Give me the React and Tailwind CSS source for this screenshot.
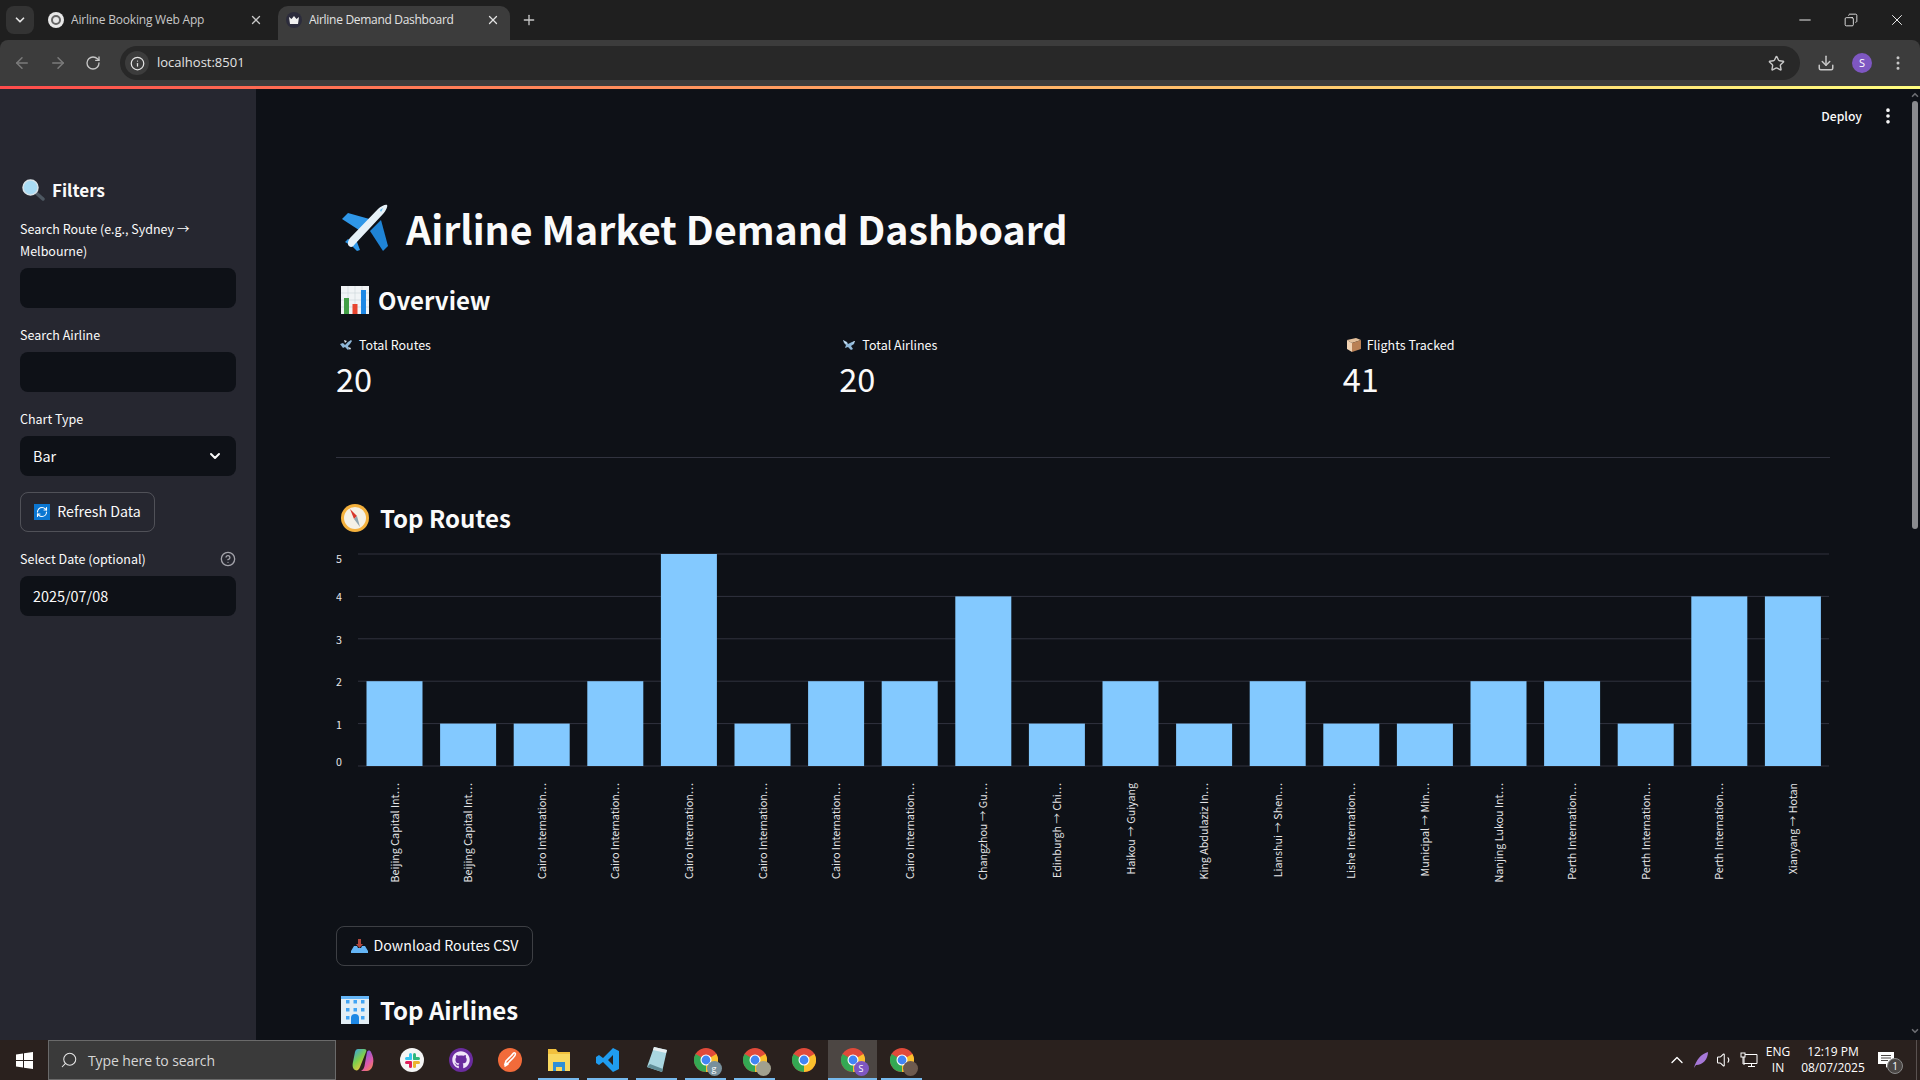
import React from 'react';
import {
  ArrowLeft, ArrowRight, RotateCw, Info, Star, Download, EllipsisVertical, ChevronDown, ChevronUp,
  X, Plus, Minus, Search, Copy, CircleHelp, RefreshCw, Volume1,
} from 'lucide-react';
import { FaGithub } from 'react-icons/fa';

// ─── Data ─────────────────────────────────────────────────────────────────────

const ROUTES = [
  { label: 'Beijing Capital Int…', value: 2 },
  { label: 'Beijing Capital Int…', value: 1 },
  { label: 'Cairo Internation…', value: 1 },
  { label: 'Cairo Internation…', value: 2 },
  { label: 'Cairo Internation…', value: 5 },
  { label: 'Cairo Internation…', value: 1 },
  { label: 'Cairo Internation…', value: 2 },
  { label: 'Cairo Internation…', value: 2 },
  { label: 'Changzhou → Gu…', value: 4 },
  { label: 'Edinburgh → Chi…', value: 1 },
  { label: 'Haikou → Guiyang', value: 2 },
  { label: 'King Abdulaziz In…', value: 1 },
  { label: 'Lianshui → Shen…', value: 2 },
  { label: 'Lishe Internation…', value: 1 },
  { label: 'Municipal → Min…', value: 1 },
  { label: 'Nanjing Lukou Int…', value: 2 },
  { label: 'Perth Internation…', value: 2 },
  { label: 'Perth Internation…', value: 1 },
  { label: 'Perth Internation…', value: 4 },
  { label: 'Xianyang → Hotan', value: 4 },
];

// ─── Emoji drawings ───────────────────────────────────────────────────────────

function PlaneEmoji() {
  return (
    <svg width="50" height="48" viewBox="0 0 50 48" className="shrink-0">
      <path d="M1 15l6-6 25 7-11 12z" fill="#2f97e8" />
      <path d="M29 27l11-11 7 26-5 5z" fill="#1f84d6" />
      <path d="M4 38l3-3 9 3 3 8-3 1-5-5z" fill="#2f97e8" />
      <path d="M8 42c-2-2-1-5 1-8L37 5c3-3 8-5 9-4s-1 6-4 9L14 40c-2 3-4 4-6 2z" fill="#e6f1f8" />
      <path d="M39 6l3-2-2 4z" fill="#5bb8ee" />
    </svg>
  );
}

function ChartEmoji() {
  return (
    <svg width="28" height="28" viewBox="0 0 28 28" className="shrink-0">
      <rect width="28" height="28" fill="#f1f4f6" />
      <path d="M0 7h28M0 14h28M0 21h28M7 0v28M14 0v28M21 0v28" stroke="#cfd8dc" strokeWidth="0.7" />
      <rect x="3" y="12" width="5" height="16" fill="#43a047" />
      <rect x="11.5" y="18" width="5" height="10" fill="#e8452f" />
      <rect x="20" y="4" width="5" height="24" fill="#1e88e5" />
    </svg>
  );
}

function CompassEmoji() {
  return (
    <svg width="30" height="30" viewBox="0 0 30 30" className="shrink-0">
      <circle cx="15" cy="15" r="14" fill="#f4b13d" />
      <circle cx="15" cy="15" r="11" fill="#f5f1e6" />
      <path d="M10 6l7 7-3 3z" fill="#d8372c" />
      <path d="M20 24l-6-8 3-3z" fill="#90a4ae" />
    </svg>
  );
}

function MagnifierEmoji() {
  return (
    <svg width="23" height="22" viewBox="0 0 23 22" className="shrink-0">
      <path d="M13 13l8 7" stroke="#4d5761" strokeWidth="3.5" strokeLinecap="round" />
      <circle cx="8.5" cy="8.5" r="7.5" fill="#a9dcf5" stroke="#d9e3e8" strokeWidth="1.5" />
    </svg>
  );
}

function OfficeEmoji() {
  const windows = [4, 12, 20].flatMap(y => [5, 12.5, 20].map(x => ({ x, y })));
  return (
    <svg width="28" height="28" viewBox="0 0 28 28" className="shrink-0">
      <rect width="28" height="28" fill="#e3eef5" />
      <rect width="28" height="3" fill="#64b5f6" />
      {windows.map((w, i) => <rect key={i} x={w.x} y={w.y} width="3.5" height="3.5" fill="#42a5f5" />)}
      <path d="M10 28v-6a4 4 0 0 1 8 0v6z" fill="#1e88e5" />
    </svg>
  );
}

function TrayEmoji() {
  return (
    <svg width="17" height="14" viewBox="0 0 17 14" className="shrink-0">
      <rect x="7" y="0" width="3" height="7" fill="#b0473d" />
      <path d="M5 5h7l-3.5 4z" fill="#b0473d" />
      <path d="M3 7h3l1 2h3l1-2h3l3 5v2H0v-2z" fill="#64b5f6" />
    </svg>
  );
}

function RefreshEmoji() {
  return (
    <span className="w-[16px] h-[16px] bg-[#0b76d1] shrink-0 flex items-center justify-center">
      <RefreshCw size={12} color="#ffffff" strokeWidth={2.2} />
    </span>
  );
}

function RoutesEmoji() {
  return (
    <svg width="14" height="12" viewBox="0 0 14 12" className="shrink-0">
      <path d="M1 5l3-1 2 2 3-3 3-2 1 1-2 3-2 2 1 3-1 1-3-3-2 1z" fill="#8fb8d8" />
      <path d="M5 1l3 1-2 2z M9 8l3 1-1 2z" fill="#e1eaf0" />
    </svg>
  );
}

function AirlinesEmoji() {
  return (
    <svg width="14" height="12" viewBox="0 0 14 12" className="shrink-0">
      <path d="M1 1l4 2 1 2 4-2 3-1-1 3-3 2 2 3-2 1-3-3-3 1 1-3-2-2z" fill="#8fb8d8" />
      <path d="M1 1l4 3-1 1zM12 2l1 0-3 3z" fill="#e1eaf0" />
    </svg>
  );
}

function BoxEmoji() {
  return (
    <svg width="15" height="14" viewBox="0 0 15 14" className="shrink-0">
      <path d="M1 2l9-2 5 2-9 3z" fill="#e3bf9a" />
      <path d="M1 2l5 3v9l-5-3z" fill="#f0d2b3" />
      <path d="M6 5l9-3v9l-9 3z" fill="#b98055" />
    </svg>
  );
}

// ─── Browser favicons / taskbar icons ─────────────────────────────────────────

function ChromeIcon({ badge, badgeClass }) {
  return (
    <span className="relative w-[24px] h-[24px] block">
      <svg width="24" height="24" viewBox="0 0 24 24">
        <circle cx="12" cy="12" r="12" fill="#e04a3a" />
        <path d="M12 12L22.4 6A12 12 0 0 1 12 24z" fill="#fbc02d" />
        <path d="M12 12l0 12A12 12 0 0 1 1.6 6z" fill="#34a853" />
        <circle cx="12" cy="12" r="5.5" fill="#ffffff" />
        <circle cx="12" cy="12" r="4.4" fill="#4285f4" />
      </svg>
      {badge !== undefined && (
        <span className={`absolute -right-[4px] -bottom-[4px] w-[15px] h-[15px] rounded-full flex items-center justify-center text-[9px] leading-none text-white ${badgeClass}`}>
          {badge}
        </span>
      )}
    </span>
  );
}

const TASK_ICONS = [
  {
    node: (
      <svg width="22" height="24" viewBox="0 0 22 24">
        <defs>
          <linearGradient id="copLeft" x1="0" y1="0" x2="0.6" y2="1">
            <stop offset="0" stopColor="#2f9df0" />
            <stop offset="0.55" stopColor="#7ed04b" />
            <stop offset="1" stopColor="#f5c63c" />
          </linearGradient>
          <linearGradient id="copRight" x1="0.4" y1="0" x2="1" y2="1">
            <stop offset="0" stopColor="#7d5be0" />
            <stop offset="0.55" stopColor="#e05aa8" />
            <stop offset="1" stopColor="#f7933c" />
          </linearGradient>
        </defs>
        <path d="M6 1h6c2 0 3 1 2 3l-6 15c-1 3-3 4-5 3-2-1-3-4-2-8L3 4c.5-2 1.500-3 3-3z" fill="url(#copLeft)" />
        <path d="M15 4c1-2 3-2 4 0 2 4 3 8 2 12-.5 4-3 7-6 7H9c2-1 3-3 3.500-5z" fill="url(#copRight)" />
      </svg>
    ),
  },
  {
    node: (
      <svg width="24" height="24" viewBox="0 0 24 24">
        <circle cx="12" cy="12" r="12" fill="#f5f5f5" />
        <rect x="9" y="5" width="3" height="7" rx="1.5" fill="#36c5f0" />
        <rect x="5" y="9" width="7" height="3" rx="1.5" fill="#36c5f0" />
        <rect x="13" y="5" width="3" height="7" rx="1.5" fill="#2eb67d" />
        <rect x="13" y="9" width="7" height="3" rx="1.5" fill="#2eb67d" />
        <rect x="13" y="13" width="3" height="7" rx="1.5" fill="#ecb22e" />
        <rect x="13" y="13" width="7" height="3" rx="1.5" fill="#ecb22e" />
        <rect x="9" y="13" width="3" height="7" rx="1.5" fill="#e01e5a" />
        <rect x="5" y="13" width="7" height="3" rx="1.5" fill="#e01e5a" />
      </svg>
    ),
  },
  {
    node: (
      <span className="w-[24px] h-[24px] rounded-full bg-[#6a2c9e] flex items-center justify-center">
        <FaGithub size={18} color="#f1e6fa" />
      </span>
    ),
  },
  {
    node: (
      <svg width="24" height="24" viewBox="0 0 24 24">
        <circle cx="12" cy="12" r="12" fill="#f26b3a" />
        <path d="M17 5c1 1 0 3-2 5l-5 5-3 1 1-3 5-5c2-2 3-4 4-3zM7 18l3-2" stroke="#ffffff" strokeWidth="1.6" fill="none" strokeLinecap="round" />
      </svg>
    ),
  },
  {
    running: true,
    node: (
      <svg width="24" height="22" viewBox="0 0 24 22">
        <path d="M1 0h8l2 3h12v19H1z" fill="#f2c13d" />
        <rect x="1" y="5" width="22" height="17" fill="#f9d860" />
        <path d="M6 13h12v9h-3v-4H9v4H6z" fill="#2f8fd6" />
      </svg>
    ),
  },
  {
    running: true,
    node: (
      <svg width="24" height="24" viewBox="0 0 24 24">
        <path d="M17 0l6 3v18l-6 3L7 14l-4 3-3-2V9l3-2 4 3zm0 7l-5 5 5 5z" fill="#1f9cf0" fillRule="evenodd" />
      </svg>
    ),
  },
  {
    running: true,
    node: (
      <svg width="22" height="26" viewBox="0 0 22 26">
        <path d="M8 0l13 3-5 22-15-5z" fill="#a9d6e0" />
        <path d="M8 0l13 3-1 3L7 3z" fill="#e8eef0" />
        <path d="M1 20l15 5 1-3-13-5z" fill="#5f8c96" />
      </svg>
    ),
  },
  { running: true, node: <ChromeIcon badge="g" badgeClass="bg-[#78909c]" /> },
  { running: true, node: <ChromeIcon badge="" badgeClass="bg-[#a1a08f]" /> },
  { node: <ChromeIcon /> },
  { running: true, active: true, node: <ChromeIcon badge="S" badgeClass="bg-[#7e57c2]" /> },
  { running: true, node: <ChromeIcon badge="" badgeClass="bg-[#6d5a4f]" /> },
];

// ─── Browser chrome ───────────────────────────────────────────────────────────

function BrowserTabs() {
  return (
    <div className="h-[40px] bg-[#1f1f1f] flex items-end pl-[6px] font-['Open_Sans',sans-serif] shrink-0">
      <div className="w-[28px] h-[28px] rounded-lg bg-[#333333] flex items-center justify-center mb-[6px]">
        <ChevronDown size={14} color="#e3e3e3" strokeWidth={3} />
      </div>
      <div className="w-[244px] h-[34px] flex items-center pl-[14px] pr-[15px] pb-[6px] gap-[7px]">
        <span className="w-[16px] h-[16px] rounded-full bg-[#e8e8e8] flex items-center justify-center shrink-0">
          <span className="w-[10px] h-[10px] rounded-full border-2 border-[#666666]" />
        </span>
        <span className="text-[12px] text-[#c7c7c7] flex-1 truncate tracking-[-0.2px]">Airline Booking Web App</span>
        <X size={14} color="#c7c7c7" strokeWidth={2.2} />
      </div>
      <div className="w-[232px] h-[34px] rounded-t-[10px] bg-[#3c3c3c] flex items-center pl-[8px] pr-[10px] pb-[6px] gap-[7px]">
        <span className="w-[16px] h-[16px] rounded-full bg-[#2c2c3c] flex items-center justify-center shrink-0">
          <svg width="10" height="8" viewBox="0 0 10 8"><path d="M0 1l2.500 2L5 0l2.500 3L10 1 9 8H1z" fill="#f0f0f0" /></svg>
        </span>
        <span className="text-[12px] text-[#e3e3e3] flex-1 truncate tracking-[-0.3px]">Airline Demand Dashboard</span>
        <X size={14} color="#e3e3e3" strokeWidth={2.2} />
      </div>
      <div className="ml-[11px] mb-[12px]">
        <Plus size={16} color="#c7c7c7" strokeWidth={2} />
      </div>
      <div className="flex-1" />
      <div className="flex items-center gap-[30px] pr-[14px] mb-[11px]">
        <Minus size={18} color="#ffffff" strokeWidth={1.2} />
        <Copy size={14} color="#ffffff" strokeWidth={1.4} className="-scale-x-100" />
        <X size={18} color="#ffffff" strokeWidth={1.2} />
      </div>
    </div>
  );
}

function AddressBar() {
  return (
    <div className="h-[46px] bg-[#3c3c3c] rounded-t-[8px] flex items-center shrink-0 font-['Open_Sans',sans-serif]">
      <div className="flex items-center gap-[18px] pl-[13px] w-[120px]">
        <ArrowLeft size={18} color="#7b7b7b" />
        <ArrowRight size={18} color="#7b7b7b" />
        <RotateCw size={16} color="#c7c7c7" />
      </div>
      <div className="w-[1680px] h-[34px] rounded-full bg-[#282828] flex items-center pl-[5px] pr-[15px]">
        <span className="w-[24px] h-[24px] rounded-full bg-[#3c3c3c] flex items-center justify-center">
          <Info size={15} color="#e3e3e3" />
        </span>
        <span className="ml-[8px] text-[13px] text-[#e3e3e3] flex-1">localhost:8501</span>
        <Star size={17} color="#c7c7c7" />
      </div>
      <div className="flex items-center pl-[17px]">
        <Download size={18} color="#c7c7c7" />
        <span className="ml-[17px] w-[20px] h-[20px] rounded-full bg-[#7e57c2] text-white text-[11px] flex items-center justify-center">S</span>
        <EllipsisVertical size={18} color="#c7c7c7" className="ml-[17px]" />
      </div>
    </div>
  );
}

// ─── Streamlit sidebar ────────────────────────────────────────────────────────

function Field({ label, children, help }) {
  return (
    <div className="flex flex-col">
      <div className="flex items-center justify-between mb-[6px]">
        <label className="text-[12.5px] leading-[22px] text-[#fafafa]">{label}</label>
        {help && <CircleHelp size={16} color="#a3a3aa" />}
      </div>
      {children}
    </div>
  );
}

function InputBox({ children }) {
  return (
    <div className="h-[40px] rounded-lg bg-[#0e1117] flex items-center justify-between px-[13px] pb-[1px] text-[14.4px] text-[#fafafa]">
      {children}
    </div>
  );
}

function Sidebar() {
  return (
    <aside className="w-[256px] bg-[#262730] pt-[86px] px-[20px] shrink-0">
      <h2 className="flex items-center gap-[7px] h-[30px] text-[17px] font-semibold text-[#fafafa] mb-[13px] pl-[2px]">
        <MagnifierEmoji />
        Filters
      </h2>
      <div className="flex flex-col gap-[16px]">
        <Field label="Search Route (e.g., Sydney → Melbourne)"><InputBox /></Field>
        <Field label="Search Airline"><InputBox /></Field>
        <Field label="Chart Type">
          <InputBox>
            Bar
            <ChevronDown size={16} color="#fafafa" strokeWidth={3} />
          </InputBox>
        </Field>
        <button className="w-[135px] h-[40px] rounded-lg border border-[#fafafa33] flex items-center justify-center gap-[7px] pb-[1px] text-[14.2px] text-[#fafafa]">
          <RefreshEmoji />
          Refresh Data
        </button>
        <Field label="Select Date (optional)" help>
          <InputBox>2025/07/08</InputBox>
        </Field>
      </div>
    </aside>
  );
}

// ─── Main content ─────────────────────────────────────────────────────────────

function Metric({ icon, label, value }) {
  return (
    <div className="flex-1">
      <div className="flex items-center gap-[6px] h-[22px] pl-[3px] text-[12.5px] text-[#fafafa]">
        {icon}
        {label}
      </div>
      <div className="mt-[2px] h-[40px] leading-[40px] text-[32.5px] text-[#fafafa]">{value}</div>
    </div>
  );
}

function RoutesChart() {
  const top = 9;
  const base = 221;
  const step = (base - top) / 5;
  const ticks = [0, 1, 2, 3, 4, 5];
  const barStep = 73.6;

  return (
    <svg width="1494" height="360" className="block font-['Noto_Sans_CJK_SC',sans-serif]">
      {ticks.map(t => (
        <g key={t}>
          <line x1="22" x2="1493" y1={base - t * step} y2={base - t * step} stroke="#31333f" />
          <text
            x="3"
            y={base - t * step + (t === 5 ? 9 : t === 0 ? 0 : 5)}
            fontSize="10.7"
            fill="#e6e6e8"
            textAnchor="middle"
          >
            {t}
          </text>
        </g>
      ))}
      {ROUTES.map((r, i) => {
        const x = 30.5 + i * barStep;
        const cx = x + 28;
        return (
          <g key={i}>
            <rect x={x} y={base - r.value * step} width="56" height={r.value * step} fill="#83c9ff" />
            <text
              transform={`translate(${cx + 4} 238) rotate(-90)`}
              fontSize="10.7"
              fill="#e6e6e8"
              textAnchor="end"
            >
              {r.label}
            </text>
          </g>
        );
      })}
    </svg>
  );
}

function Dashboard() {
  return (
    <main className="flex-1 min-w-0 flex flex-col bg-[#0e1117]">
      <div className="h-[54px] shrink-0 flex items-center justify-end gap-[16px] pr-[6px]">
        <span className="text-[12.2px] font-medium text-[#fafafa]">Deploy</span>
        <EllipsisVertical size={20} color="#fafafa" strokeWidth={2.4} />
      </div>
      <div className="pl-[80px] pr-[74px] flex flex-col">
        <h1 className="mt-[55px] h-[60px] flex items-center gap-[15px] pl-[5px] text-[39.3px] font-bold text-[#fafafa] leading-[60px]">
          <PlaneEmoji />
          Airline Market Demand Dashboard
        </h1>
        <h3 className="mt-[22px] h-[40px] flex items-center gap-[9px] pl-[5px] text-[24px] font-semibold text-[#fafafa]">
          <ChartEmoji />
          Overview
        </h3>
        <div className="mt-[14px] flex gap-[16px]">
          <Metric icon={<RoutesEmoji />} label="Total Routes" value="20" />
          <Metric icon={<AirlinesEmoji />} label="Total Airlines" value="20" />
          <Metric icon={<BoxEmoji />} label="Flights Tracked" value="41" />
        </div>
        <hr className="mt-[59px] border-0 border-t border-[#31333f]" />
        <h3 className="mt-[40px] h-[40px] flex items-center gap-[10px] pl-[4px] text-[24px] font-semibold text-[#fafafa]">
          <CompassEmoji />
          Top Routes
        </h3>
        <div className="mt-[7px]">
          <RoutesChart />
        </div>
        <button className="mt-[21px] w-[197px] h-[40px] rounded-lg border border-[#fafafa33] flex items-center justify-center gap-[6px] pb-[1px] text-[14.2px] text-[#fafafa]">
          <TrayEmoji />
          Download Routes CSV
        </button>
        <h3 className="mt-[24px] h-[40px] flex items-center gap-[11px] pl-[5px] text-[24px] font-semibold text-[#fafafa]">
          <OfficeEmoji />
          Top Airlines
        </h3>
      </div>
    </main>
  );
}

function ScrollBar() {
  return (
    <div className="w-[16px] shrink-0 bg-[#0e1117] flex flex-col items-center pl-[6px] pt-[1px] pb-[4px]">
      <ChevronUp size={10} color="#6b6d72" strokeWidth={4} />
      <div className="w-[6px] h-[428px] mt-[1px] rounded-full bg-[#8a8b8f]" />
      <div className="flex-1" />
      <ChevronDown size={10} color="#6b6d72" strokeWidth={4} />
    </div>
  );
}

// ─── Windows taskbar ──────────────────────────────────────────────────────────

function Taskbar() {
  return (
    <footer className="h-[40px] bg-[#2a211e] flex items-stretch shrink-0 font-['Open_Sans',sans-serif]">
      <div className="w-[48px] flex items-center justify-center">
        <svg width="17" height="17" viewBox="0 0 17 17">
          <path d="M0 2.400l7-1v6.600H0zM8 1.200L17 0v8H8zM0 9h7v6.600l-7-1zM8 9h9v8l-9-1.200z" fill="#ffffff" />
        </svg>
      </div>
      <div className="w-[288px] bg-[#3a3a3a] border border-[#6a6a6a] flex items-center pl-[11px] gap-[10px]">
        <Search size={18} color="#e6e6e6" strokeWidth={1.4} className="-scale-x-100" />
        <span className="text-[14px] text-[#d6d6d6] tracking-[-0.1px]">Type here to search</span>
      </div>
      <div className="flex items-stretch ml-[2px]">
        {TASK_ICONS.map((t, i) => (
          <div
            key={i}
            className={`relative w-[49px] flex items-center justify-center ${t.active ? 'bg-[#4c4643]' : ''}`}
          >
            {t.node}
            {t.running && (
              <span className={`absolute bottom-0 h-[2px] bg-[#76b9ed] ${t.active ? 'inset-x-0' : 'inset-x-[4px]'}`} />
            )}
          </div>
        ))}
      </div>
      <div className="flex-1" />
      <div className="flex items-center text-white pr-[20px]">
        <ChevronUp size={20} color="#ffffff" strokeWidth={1.6} />
        <svg width="16" height="18" viewBox="0 0 16 18" className="ml-[6px]">
          <path d="M1 17C3 9 8 3 15 1c0 7-5 13-12 13z" fill="#a678d8" />
        </svg>
        <Volume1 size={18} color="#ffffff" strokeWidth={1.4} className="ml-[7px]" />
        <svg width="18" height="16" viewBox="0 0 18 16" className="ml-[6px]" fill="none" stroke="#ffffff" strokeWidth="1">
          <path d="M4 2.500h13v9H4zM8 14.500h7M11.500 11.500v3" />
          <rect x="1" y="1" width="4" height="4" fill="#2a211e" />
          <path d="M3 5v7h2" />
        </svg>
        <div className="ml-[5px] w-[30px] flex flex-col items-center text-[12px] leading-[16px]">
          <span>ENG</span>
          <span>IN</span>
        </div>
        <div className="ml-[5px] w-[70px] flex flex-col items-center text-[12px] leading-[16px]">
          <span>12:19 PM</span>
          <span>08/07/2025</span>
        </div>
        <span className="relative ml-[8px] w-[20px] h-[20px] flex items-center justify-center">
          <svg width="16" height="16" viewBox="0 0 16 16">
            <path d="M0 0h16v12h-5l-3 4v-4H0z" fill="#ffffff" />
            <path d="M3 3.500h10M3 6h10M3 8.500h7" stroke="#4a4644" strokeWidth="1" />
          </svg>
          <span className="absolute -right-[7px] -bottom-[4px] w-[16px] h-[16px] rounded-full bg-[#4a4644] border border-[#8a8a8a] text-[10px] leading-none flex items-center justify-center">1</span>
        </span>
      </div>
      <div className="w-[1px] bg-[#5a5250] mr-[3px]" />
    </footer>
  );
}

// ─── Page ─────────────────────────────────────────────────────────────────────

export default function App() {
  return (
    <div className="w-[1920px] h-[1080px] overflow-hidden flex flex-col bg-[#1f1f1f] font-['Noto_Sans_CJK_SC',sans-serif]">
      <BrowserTabs />
      <AddressBar />
      <div className="h-[3px] shrink-0 bg-gradient-to-r from-[#ff4b4b] to-[#fffd80]" />
      <div className="flex-1 min-h-0 flex overflow-hidden">
        <Sidebar />
        <Dashboard />
        <ScrollBar />
      </div>
      <Taskbar />
    </div>
  );
}
